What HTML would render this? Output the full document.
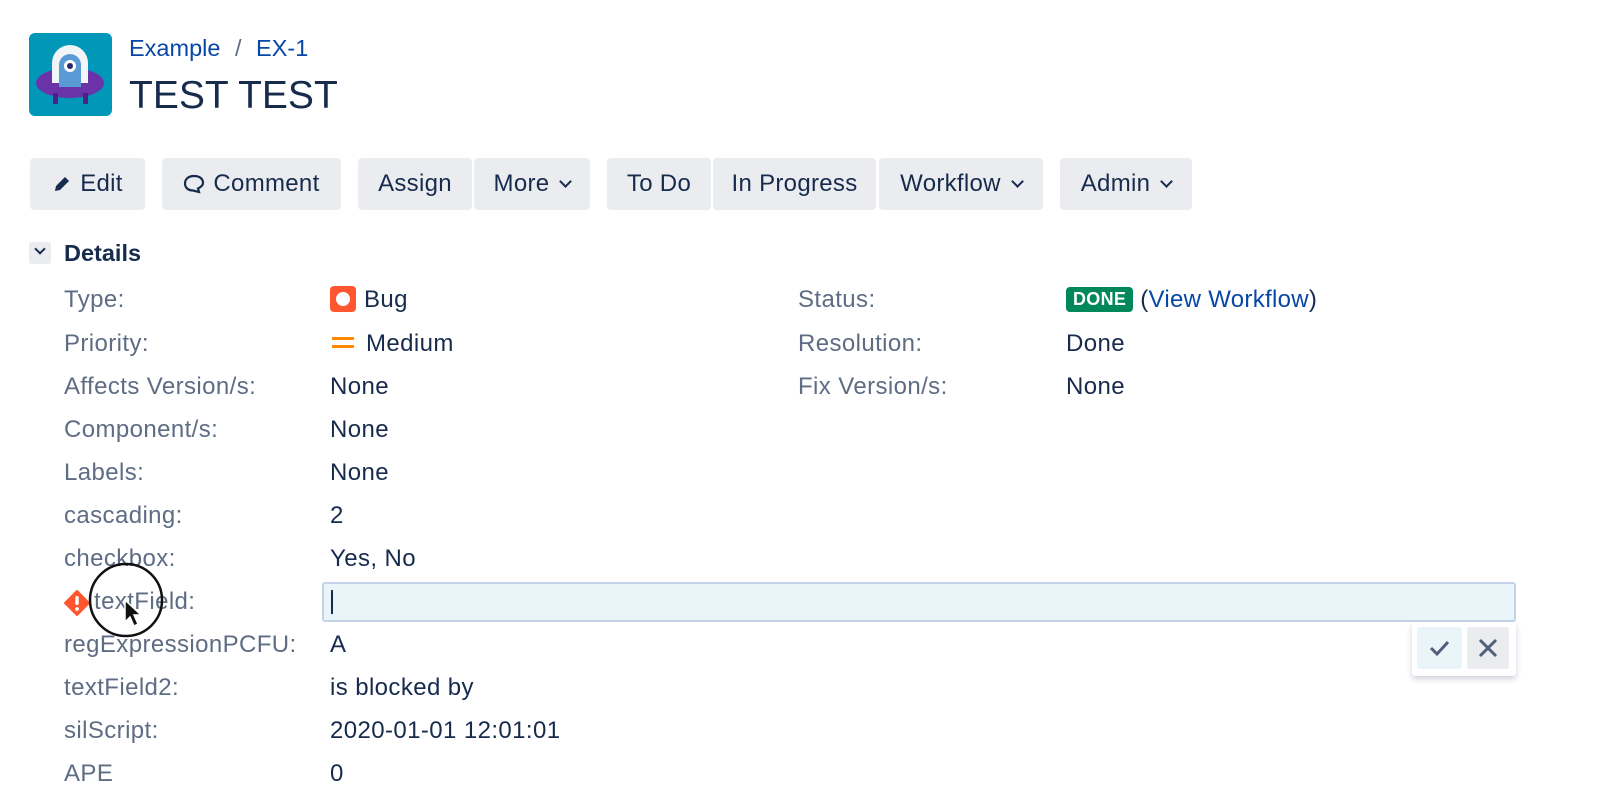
<!DOCTYPE html>
<html><head><meta charset="utf-8"><style>
*{margin:0;padding:0;box-sizing:border-box}
body{width:1600px;height:785px;overflow:hidden;background:#fff;font-family:"Liberation Sans",sans-serif;color:#172b4d;position:relative}
.a{position:absolute;white-space:nowrap}
.btn{position:absolute;top:158px;height:52px;background:#ebecf0;border-radius:4px;font-size:24px;letter-spacing:0.3px;line-height:52px;color:#172b4d;text-align:center;white-space:nowrap}
.l{position:absolute;left:64px;font-size:24px;letter-spacing:0.4px;color:#5e6c84;white-space:nowrap}
.v{position:absolute;left:330px;font-size:24px;letter-spacing:0.4px;color:#172b4d;white-space:nowrap}
.chev{display:inline-block;width:9px;height:9px;border-right:2.5px solid #172b4d;border-bottom:2.5px solid #172b4d;transform:rotate(45deg);margin-left:12px;position:relative;top:-5px}
</style></head><body>
<svg class="a" style="left:29px;top:33px" width="83" height="83" viewBox="0 0 83 83">
<rect width="83" height="83" rx="6" fill="#0097b8"/>
<ellipse cx="41" cy="50" rx="34" ry="15" fill="#6a34a8"/>
<rect x="24" y="60" width="5" height="11" fill="#4a2188"/><rect x="54" y="60" width="5" height="11" fill="#4a2188"/>
<path d="M23 50 V30 a18 18 0 0 1 36 0 V50 z" fill="#f2f5f8"/>
<path d="M30 54 V32 a11 11 0 0 1 22 0 V54 z" fill="#5b9bd5"/>
<circle cx="41" cy="33" r="6" fill="#fff"/><circle cx="41" cy="33" r="3" fill="#2a2a6a"/>
</svg>
<div class="a" style="left:129px;top:35px;font-size:23.5px;color:#0747a6">Example <span style="color:#5e6c84;margin:0 8px">/</span> EX-1</div>
<div class="a" style="left:129px;top:74px;font-size:39px;color:#172b4d">TEST TEST</div>

<div class="btn" style="left:30px;width:115px"><svg width="20" height="20" viewBox="0 0 20 20" style="vertical-align:-3px;margin-right:8px"><path d="M3 17 L4 12 L13 3 L17 7 L8 16 Z" fill="#172b4d"/></svg>Edit</div>
<div class="btn" style="left:162px;width:179px"><svg width="22" height="20" viewBox="0 0 22 20" style="vertical-align:-3px;margin-right:8px"><path d="M11 2 C5 2 2 5.5 2 9.5 C2 13.5 5 16.5 10 16.5 L16 18 L15 14.5 C18 13 20 11 20 9 C20 5 17 2 11 2Z" fill="none" stroke="#172b4d" stroke-width="2.2"/></svg>Comment</div>
<div class="btn" style="left:358px;width:114px">Assign</div>
<div class="btn" style="left:474px;width:116px">More<span class="chev"></span></div>
<div class="btn" style="left:607px;width:104px">To Do</div>
<div class="btn" style="left:713px;width:163px">In Progress</div>
<div class="btn" style="left:879px;width:164px">Workflow<span class="chev"></span></div>
<div class="btn" style="left:1060px;width:132px">Admin<span class="chev"></span></div>

<div class="a" style="left:29px;top:242px;width:22px;height:22px;background:#ebecf0;border-radius:3px"><span class="chev" style="margin-left:7px;top:-2px;width:8px;height:8px"></span></div>
<div class="a" style="left:64px;top:240px;font-size:23.5px;font-weight:bold">Details</div>

<div class="l" style="top:286px">Type:</div>
<div class="v" style="top:286px"><span style="display:inline-block;width:26px;height:26px;background:#ff5630;border-radius:4px;vertical-align:-5px;position:relative;margin-right:8px"><span style="position:absolute;left:6px;top:6px;width:14px;height:14px;border-radius:50%;background:#fff"></span></span>Bug</div>
<div class="l" style="top:330px">Priority:</div>
<div class="v" style="top:330px"><span style="display:inline-block;width:22px;height:11px;border-top:3px solid #ff8b00;border-bottom:3px solid #ff8b00;vertical-align:3px;margin-right:12px;margin-left:2px"></span>Medium</div>
<div class="l" style="top:373px">Affects Version/s:</div><div class="v" style="top:373px">None</div>
<div class="l" style="top:416px">Component/s:</div><div class="v" style="top:416px">None</div>
<div class="l" style="top:459px">Labels:</div><div class="v" style="top:459px">None</div>
<div class="l" style="top:502px">cascading:</div><div class="v" style="top:502px">2</div>
<div class="l" style="top:545px">checkbox:</div><div class="v" style="top:545px">Yes, No</div>
<div class="l" style="top:588px;left:94px">textField:</div>
<svg class="a" style="left:64px;top:590px" width="26" height="26" viewBox="0 0 26 26"><path d="M13 1 L25 13 L13 25 L1 13 Z" fill="#ff5630" stroke="#ff5630" stroke-width="2" stroke-linejoin="round"/><rect x="11.3" y="6" width="3.4" height="9" rx="1.5" fill="#fff"/><circle cx="13" cy="19" r="1.9" fill="#fff"/></svg>
<div class="l" style="top:631px">regExpressionPCFU:</div><div class="v" style="top:631px">A</div>
<div class="l" style="top:674px">textField2:</div><div class="v" style="top:674px">is blocked by</div>
<div class="l" style="top:717px">silScript:</div><div class="v" style="top:717px">2020-01-01 12:01:01</div>
<div class="l" style="top:760px">APE</div><div class="v" style="top:760px">0</div>

<div class="l" style="left:798px;top:286px">Status:</div>
<div class="a" style="left:1066px;top:286px;font-size:24px;letter-spacing:0.3px"><span style="display:inline-block;background:#00875a;color:#fff;font-weight:bold;font-size:18px;padding:2px 7px;border-radius:4px;vertical-align:2px">DONE</span> <span style="color:#172b4d">(</span><span style="color:#0747a6">View Workflow</span>)</div>
<div class="l" style="left:798px;top:330px">Resolution:</div><div class="v" style="left:1066px;top:330px">Done</div>
<div class="l" style="left:798px;top:373px">Fix Version/s:</div><div class="v" style="left:1066px;top:373px">None</div>

<div class="a" style="left:322px;top:582px;width:1194px;height:40px;background:#eaf5fa;border:2px solid #c3d2e8;border-radius:3px"></div>
<div class="a" style="left:331px;top:590px;width:2px;height:24px;background:#172b4d"></div>
<div class="a" style="left:1412px;top:622px;width:104px;height:54px;background:#fff;box-shadow:0 3px 6px rgba(9,30,66,.2);border-radius:0 0 3px 3px"></div>
<div class="a" style="left:1417px;top:627px;width:45px;height:42px;background:#eaf5fa;border-radius:3px"><svg width="45" height="42" viewBox="0 0 45 42"><path d="M14 21 L20 27 L31 15" fill="none" stroke="#505f79" stroke-width="3"/></svg></div>
<div class="a" style="left:1467px;top:627px;width:42px;height:42px;background:#ebecf0;border-radius:3px"><svg width="42" height="42" viewBox="0 0 42 42"><path d="M13 13 L29 29 M29 13 L13 29" fill="none" stroke="#505f79" stroke-width="3"/></svg></div>

<svg class="a" style="left:88px;top:562px" width="80" height="80" viewBox="0 0 80 80"><circle cx="38" cy="38" r="36" fill="none" stroke="#111" stroke-width="2.5"/><path d="M37 38 L37 60 L42 55 L46 64 L50 62 L46 53 L53 53 Z" fill="#111" stroke="#fff" stroke-width="1.5"/></svg>
</body></html>
